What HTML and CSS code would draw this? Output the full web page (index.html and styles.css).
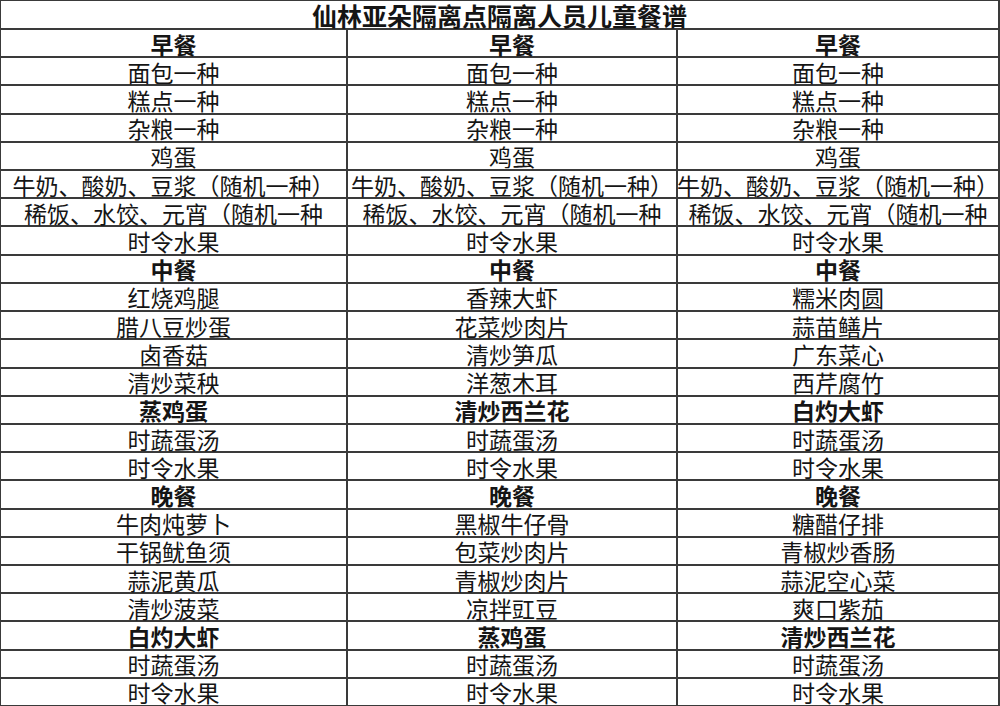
FILE: index.html
```html
<!DOCTYPE html>
<html lang="zh-CN">
<head>
<meta charset="utf-8">
<title>仙林亚朵隔离点隔离人员儿童餐谱</title>
<link rel="stylesheet" href="styles.css">
</head>
<body>
<div class="menu">
  <div class="cell title">仙林亚朵隔离点隔离人员儿童餐谱</div>

  <div class="cell b">早餐</div><div class="cell b">早餐</div><div class="cell b">早餐</div>
  <div class="cell">面包一种</div><div class="cell">面包一种</div><div class="cell">面包一种</div>
  <div class="cell">糕点一种</div><div class="cell">糕点一种</div><div class="cell">糕点一种</div>
  <div class="cell">杂粮一种</div><div class="cell">杂粮一种</div><div class="cell">杂粮一种</div>
  <div class="cell">鸡蛋</div><div class="cell">鸡蛋</div><div class="cell">鸡蛋</div>
  <div class="cell">牛奶、酸奶、豆浆（随机一种）</div><div class="cell">牛奶、酸奶、豆浆（随机一种）</div><div class="cell">牛奶、酸奶、豆浆（随机一种）</div>
  <div class="cell">稀饭、水饺、元宵（随机一种</div><div class="cell">稀饭、水饺、元宵（随机一种</div><div class="cell">稀饭、水饺、元宵（随机一种</div>
  <div class="cell">时令水果</div><div class="cell">时令水果</div><div class="cell">时令水果</div>

  <div class="cell b">中餐</div><div class="cell b">中餐</div><div class="cell b">中餐</div>
  <div class="cell">红烧鸡腿</div><div class="cell">香辣大虾</div><div class="cell">糯米肉圆</div>
  <div class="cell">腊八豆炒蛋</div><div class="cell">花菜炒肉片</div><div class="cell">蒜苗鳝片</div>
  <div class="cell">卤香菇</div><div class="cell">清炒笋瓜</div><div class="cell">广东菜心</div>
  <div class="cell">清炒菜秧</div><div class="cell">洋葱木耳</div><div class="cell">西芹腐竹</div>
  <div class="cell b">蒸鸡蛋</div><div class="cell b">清炒西兰花</div><div class="cell b">白灼大虾</div>
  <div class="cell">时蔬蛋汤</div><div class="cell">时蔬蛋汤</div><div class="cell">时蔬蛋汤</div>
  <div class="cell">时令水果</div><div class="cell">时令水果</div><div class="cell">时令水果</div>

  <div class="cell b">晚餐</div><div class="cell b">晚餐</div><div class="cell b">晚餐</div>
  <div class="cell">牛肉炖萝卜</div><div class="cell">黑椒牛仔骨</div><div class="cell">糖醋仔排</div>
  <div class="cell">干锅鱿鱼须</div><div class="cell">包菜炒肉片</div><div class="cell">青椒炒香肠</div>
  <div class="cell">蒜泥黄瓜</div><div class="cell">青椒炒肉片</div><div class="cell">蒜泥空心菜</div>
  <div class="cell">清炒菠菜</div><div class="cell">凉拌豇豆</div><div class="cell">爽口紫茄</div>
  <div class="cell b">白灼大虾</div><div class="cell b">蒸鸡蛋</div><div class="cell b">清炒西兰花</div>
  <div class="cell">时蔬蛋汤</div><div class="cell">时蔬蛋汤</div><div class="cell">时蔬蛋汤</div>
  <div class="cell">时令水果</div><div class="cell">时令水果</div><div class="cell">时令水果</div>
</div>
</body>
</html>
```
FILE: styles.css
```css
html, body {
  margin: 0;
  padding: 0;
  background: #ffffff;
}

.menu {
  width: 1000px;
  height: 706px;
  box-sizing: border-box;
  padding: 1px 2px 1px 1px;
  background: #3a3a3a;
  display: grid;
  grid-template-columns: 345px 328px 1fr;
  grid-template-rows: repeat(25, 1fr);
  gap: 2px;
  font-family: "Noto Sans CJK SC", "Noto Sans", sans-serif;
  font-size: 23px;
  color: #151515;
}

.cell {
  background: #ffffff;
  display: flex;
  align-items: center;
  justify-content: center;
  white-space: nowrap;
  overflow-x: clip;
  overflow-y: visible;
  line-height: 1;
  padding-top: 2px;
  min-width: 0;
}

.b {
  font-weight: 700;
}

.title {
  grid-column: 1 / 4;
  font-weight: 700;
  font-size: 25px;
}
```
